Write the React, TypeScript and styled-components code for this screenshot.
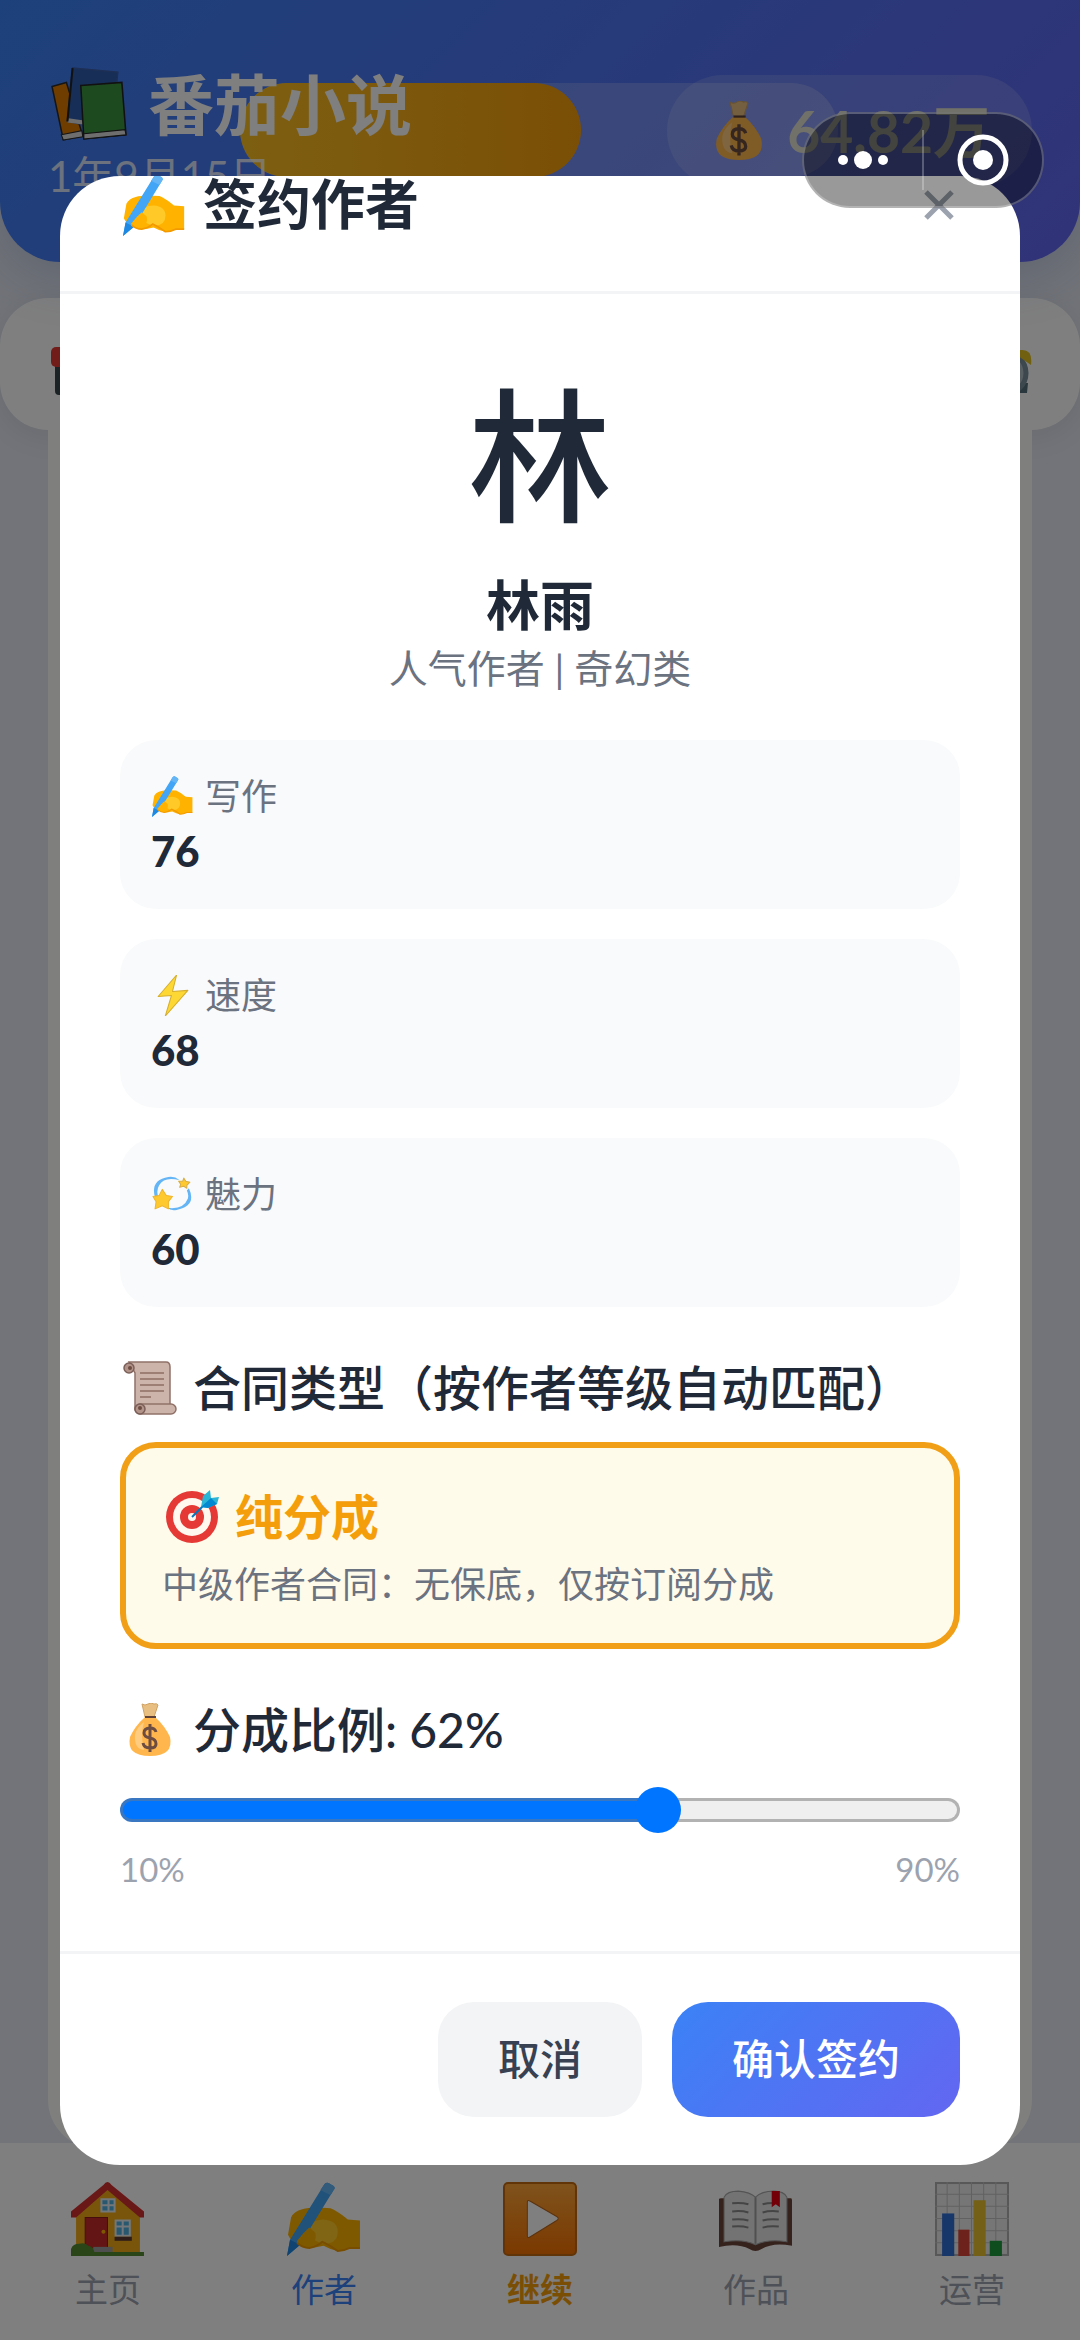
import React, { useLayoutEffect, useRef, useState } from 'react'
import styled, { createGlobalStyle } from 'styled-components'

const GlobalStyle = createGlobalStyle`
  * {
    box-sizing: border-box;
  }
  body {
    margin: 0;
    background: #e4e8f2;
    color: #1f2937;
    font-family: Lato, 'Noto Sans CJK SC', sans-serif;
  }
  button, input {
    font-family: inherit;
  }
  h1, h2, h3, p, dl, dt, dd {
    margin: 0;
  }
`

/* ---------- icons ---------- */

const Icon = styled.svg<{ $size: number }>`
  display: block;
  flex: none;
  width: ${p => p.$size}px;
  height: ${p => p.$size}px;
`

type IconProps = { size: number }

const WritingHand = ({ size }: IconProps) => (
  <Icon $size={size} viewBox="0 0 73 73" aria-hidden="true">
    <path d="M4 35Q7 29 15 27Q24 24 43 26Q50 29 60 37L72 38V65H62Q56 68 50 68Q43 67 36 63Q28 65 22 65Q14 64 10 60Q4 59 1 52Z" fill="#ffb300" />
    <path d="M18 48Q23 37 36 37Q50 38 50 49Q50 60 38 61Q26 60 18 48Z" fill="#ffca28" />
    <path d="M0 73L3 57L37 2Q39 0 41 1L46 4Q48 6 46 8L13 62Z" fill="#42a5f5" />
    <path d="M0 73L3 57L13 62Z" fill="#1e88e5" />
    <path d="M37 2Q39 0 41 1L46 4Q48 6 46 8L43 13L33 8Z" fill="#64b5f6" />
    <path d="M10 58Q16 50 22 45L28 50Q30 58 22 65Q14 64 10 60Z" fill="#ffb300" />
    <path d="M10 60Q15 65 22 65Q29 64 35 59Q42 62 50 68Q56 68 62 65H72" fill="none" stroke="#f29a00" strokeWidth="2" />
  </Icon>
)

const Books = ({ size }: IconProps) => (
  <Icon $size={size} viewBox="0 0 74 74" aria-hidden="true">
    <path d="M1 19L15 15L31 67L12 71Z" fill="#e07a00" stroke="#2b2b2b" strokeWidth="1.5" />
    <path d="M10 66L30 62L31 68L12 71Z" fill="#ddd" stroke="#2b2b2b" />
    <path d="M21 1L65 5L60 54L31 56L16 53Z" fill="#2f5cae" stroke="#3a5ea8" strokeWidth="1.5" />
    <path d="M17 50L32 52L31 56L16 54Z" fill="#ddd" />
    <path d="M21 1L16 53" stroke="#222" strokeWidth="2" />
    <path d="M29 18L69 15L73 66L32 70Z" fill="#3c9440" stroke="#222" strokeWidth="1.5" />
    <path d="M32 65L72 61L73 66L32 70Z" fill="#ddd" stroke="#222" />
  </Icon>
)

const Bolt = ({ size }: IconProps) => (
  <Icon $size={size} viewBox="0 0 40 40" aria-hidden="true">
    <path d="M24 0L6 21L19 20L13 40L35 15L20 16Z" fill="#fdd835" stroke="#d6ae2c" strokeLinejoin="round" />
  </Icon>
)

const Dizzy = ({ size }: IconProps) => (
  <Icon $size={size} viewBox="0 0 40 40" aria-hidden="true">
    <path d="M3 23Q-2 6 16 3Q22 2 27 6Q12 2 7 11Q4 16 6 22Z" fill="#64b5f6" />
    <path d="M36 14Q44 31 24 35Q18 36 15 33Q31 35 35 24Q36 20 34 16Z" fill="#64b5f6" />
    <path d="M10 15L14 21L20 22L16 27L16 34L10 31L3 34L4 27L1 22L7 21Z" fill="#fdc92f" stroke="#efb42a" strokeLinejoin="round" />
    <path d="M31 4L33 7L37 8L34 11L34 14L31 12L27 13L28 10L26 7L30 7Z" fill="#fdc92f" stroke="#d8ae45" strokeLinejoin="round" />
  </Icon>
)

const Scroll = ({ size }: IconProps) => (
  <Icon $size={size} viewBox="0 0 54 54" aria-hidden="true">
    <path d="M6 1H43Q47 1 47 6V48H12V12Z" fill="#cdb4aa" stroke="#907168" strokeWidth="1.5" />
    <circle cx="6" cy="7" r="5" fill="#b2938a" stroke="#7b5f58" strokeWidth="1.5" />
    <circle cx="7" cy="7" r="2" fill="#6d4c41" />
    <path d="M17 12H41M17 18H41M17 24H41M17 30H41M17 36H28" stroke="#8d6e63" strokeWidth="1.5" />
    <rect x="12" y="43" width="41" height="10" rx="5" fill="#cdb4aa" stroke="#907168" strokeWidth="1.5" />
    <circle cx="17" cy="48" r="5" fill="#b2938a" stroke="#7b5f58" strokeWidth="1.5" />
    <circle cx="17" cy="47" r="2" fill="#6d4c41" />
  </Icon>
)

const Target = ({ size }: IconProps) => (
  <Icon $size={size} viewBox="0 0 54 54" aria-hidden="true">
    <circle cx="27" cy="27" r="26" fill="#e53935" />
    <circle cx="27" cy="27" r="19" fill="#fff8ee" />
    <circle cx="27" cy="27" r="12" fill="#e53935" />
    <circle cx="27" cy="27" r="4" fill="#fff8ee" />
    <path d="M27 27L44 10" stroke="#0277bd" strokeWidth="2" />
    <path d="M36 17L38 6L45 0L46 8L54 7L52 14L43 18Z" fill="#29b6d6" />
    <path d="M36 17L46 8L52 14L43 18Z" fill="#0288d1" />
  </Icon>
)

const MoneyBag = ({ size }: IconProps) => (
  <Icon $size={size} viewBox="0 0 54 54" aria-hidden="true">
    <path d="M19 1Q22 3 25 1Q28 -1 31 1Q34 0 35 2L31 14H22Z" fill="#e8bf80" stroke="#d0a364" />
    <path d="M22 14H32Q42 23 47 34Q51 53 27 53Q3 53 7 34Q12 23 22 14Z" fill="#ffb74d" />
    <path d="M12 32Q13 25 21 19Q17 33 21 47Q11 46 12 32Z" fill="#ffcc80" />
    <path d="M22 14H33" stroke="#5d4037" strokeWidth="2" />
    <path d="M33 29Q32 25 27 25Q21 25 21 30Q21 34 27 35Q33 36 33 41Q33 45 27 45Q21 45 20 40M27 21V49" fill="none" stroke="#6d4c41" strokeWidth="3" />
  </Icon>
)

const House = ({ size }: IconProps) => (
  <Icon $size={size} viewBox="0 0 73 73" aria-hidden="true">
    <path d="M5 32L36 6L68 32V70H5Z" fill="#f0aa14" />
    <path d="M36 0Q38 0 40 3L72 29V35H68L36 8L5 35H0V29L32 3Q34 0 36 0Z" fill="#d32f2f" />
    <path d="M29 16H44V30H29ZM43 37H59V54H43Z" fill="#e8eef2" />
    <path d="M31 18H36V22H31ZM38 18H42V22H38ZM31 24H36V28H31ZM38 24H42V28H38ZM45 39H50V43H45ZM52 39H57V43H52ZM45 45H50V52H45ZM52 45H57V52H52Z" fill="#4fb0e0" />
    <path d="M14 35H36V65H14Z" fill="#c62828" stroke="#8e1c1c" />
    <circle cx="32" cy="49" r="2" fill="#ffb300" />
    <path d="M43 54H60V58H43Z" fill="#5d3a30" />
    <path d="M22 64H41V70H22Z" fill="#9e9e9e" />
    <path d="M0 73V66Q2 61 8 61Q14 59 17 63Q22 64 23 69H72V73Z" fill="#558b2f" />
  </Icon>
)

const PlayButton = ({ size }: IconProps) => (
  <Icon $size={size} viewBox="0 0 73 73" aria-hidden="true">
    <defs>
      <linearGradient id="play-fill" x1="0" y1="0" x2="0" y2="1">
        <stop offset="0" stopColor="#ffa63a" />
        <stop offset="1" stopColor="#f57200" />
      </linearGradient>
    </defs>
    <rect x="1" y="1" width="71" height="71" rx="4" fill="url(#play-fill)" stroke="#c46a10" strokeWidth="2" />
    <path d="M24 20Q24 17 27 19L53 34Q56 36 53 38L27 54Q24 56 24 53Z" fill="#fff" stroke="#b8651a" />
  </Icon>
)

const OpenBook = ({ size }: IconProps) => (
  <Icon $size={size} viewBox="0 0 73 73" aria-hidden="true">
    <path d="M0 17Q0 16 2 16H71Q72 16 72 18V63Q54 59 42 66Q36 70 30 66Q18 60 0 64Z" fill="#6d443b" />
    <path d="M5 15Q8 9 19 9Q31 10 36 15Q42 9 54 9Q64 9 67 15V59Q48 56 36 62Q24 56 5 59Z" fill="#e6e6e6" stroke="#a8a8a8" />
    <path d="M36 15V61" stroke="#a0a0a0" strokeWidth="2" />
    <path d="M13 21Q22 20 29 22M13 29Q22 28 29 30M13 37Q22 36 29 38M13 44Q22 43 29 45M43 22Q50 20 59 21M43 30Q50 28 59 29M43 38Q50 36 59 37M43 45Q50 43 59 44" fill="none" stroke="#8a8a8a" strokeWidth="2" />
    <path d="M52 9H60V25L56 22L52 25Z" fill="#e60012" />
  </Icon>
)

const BarChart = ({ size }: IconProps) => (
  <Icon $size={size} viewBox="0 0 73 73" aria-hidden="true">
    <rect x="1" y="1" width="71" height="71" fill="#ececec" stroke="#b0b0b0" strokeWidth="2" />
    <path d="M12 0V73M24 0V73M36 0V73M48 0V73M60 0V73M0 12H73M0 24H73M0 36H73M0 48H73M0 60H73" stroke="#c2c2c2" />
    <path d="M7 31H19V73H7Z" fill="#2f6fd6" />
    <path d="M23 47H34V73H23Z" fill="#db4437" />
    <path d="M38 18H50V73H38Z" fill="#e8c02c" />
    <path d="M54 58H66V73H54Z" fill="#1a9a3c" />
  </Icon>
)

const Siren = ({ size }: IconProps) => (
  <Icon $size={size} viewBox="0 0 54 54" aria-hidden="true">
    <path d="M4 20H50V48Q50 52 46 52H8Q4 52 4 48Z" fill="#37474f" />
    <rect x="0" y="4" width="54" height="20" rx="5" fill="#e53935" />
  </Icon>
)

const AlarmClock = ({ size }: IconProps) => (
  <Icon $size={size} viewBox="0 0 54 54" aria-hidden="true">
    <path d="M8 40L6 50H14ZM44 40H50L49 50H38Z" fill="#546e7a" />
    <circle cx="27" cy="30" r="21" fill="#b0bec5" stroke="#78909c" strokeWidth="5" />
    <path d="M1 19Q1 7 15 8ZM53 22Q55 6 43 7Q37 7 36 10Z" fill="#e0c020" />
    <path d="M27 18V32L36 36" fill="none" stroke="#37474f" strokeWidth="2" />
  </Icon>
)

/* ---------- page behind the dialog ---------- */

const Page = styled.div`
  display: flex;
  flex-direction: column;
  min-height: 100vh;
  padding-bottom: 192px;
  background: #e4e8f2;
`

const TopBar = styled.header`
  position: relative;
  display: flex;
  justify-content: space-between;
  align-items: center;
  padding: 60px 48px;
  border-radius: 0 0 60px 60px;
  background: linear-gradient(135deg, #3b82f6, #6366f1);
  box-shadow: 0 12px 60px rgba(59, 90, 160, 0.25);
  color: #fff;
`

const Brand = styled.div`
  position: relative;
`

const BrandName = styled.h1`
  display: flex;
  align-items: center;
  gap: 21px;
  padding-left: 3px;
  font-size: 66px;
  line-height: 90px;
  font-weight: 700;
`

const GameDate = styled.p`
  font-size: 42px;
  line-height: 52px;
  opacity: 0.8;
`

const Progress = styled.div`
  position: absolute;
  top: 83px;
  left: 240px;
  right: 242px;
  height: 94px;
  border-radius: 47px;
  background: rgba(255, 255, 255, 0.2);
`

const ProgressFill = styled.div`
  height: 100%;
  border-radius: 47px;
  background: linear-gradient(90deg, #fbbf24, #f59e0b);
`

const Money = styled.div`
  position: relative;
  display: flex;
  align-items: center;
  gap: 18px;
  padding: 18px 42px;
  border-radius: 60px;
  background: rgba(255, 255, 255, 0.15);
  color: #e2e2d2;
  font-size: 57px;
  line-height: 76px;
  font-weight: 700;
`

const NoticeBar = styled.section`
  display: flex;
  justify-content: space-between;
  align-items: center;
  margin-top: 36px;
  padding: 45px 48px 33px 51px;
  border-radius: 48px;
  background: #fff;
  box-shadow: 0 6px 30px rgba(0, 0, 0, 0.08);
`

const ContentCard = styled.main`
  flex: 1;
  margin: 0 48px;
  border-radius: 0 0 48px 48px;
  background: #fefefa;
`

const TabBar = styled.nav`
  position: fixed;
  left: 0;
  right: 0;
  bottom: 0;
  display: flex;
  background: #fff;
`

const Tab = styled.a<{ $color?: string; $strong?: boolean }>`
  flex: 1;
  display: flex;
  flex-direction: column;
  align-items: center;
  gap: 9px;
  padding: 39px 0 27px;
  color: ${p => p.$color || '#9ca3af'};
  font-size: 33px;
  line-height: 48px;
  font-weight: ${p => (p.$strong ? 700 : 400)};
  text-decoration: none;
`

/* ---------- dialog ---------- */

const Overlay = styled.div`
  position: fixed;
  inset: 0;
  display: flex;
  align-items: center;
  justify-content: center;
  padding: 0 60px;
  background: rgba(0, 0, 0, 0.5);
`

const Modal = styled.div`
  width: 100%;
  max-height: 85vh;
  overflow-y: auto;
  scrollbar-width: none;
  border-radius: 60px;
  background: #fff;
`

const ModalHeader = styled.div`
  display: flex;
  justify-content: space-between;
  align-items: center;
  padding: 48px 60px;
  border-bottom: 3px solid #f3f4f6;
`

const ModalTitle = styled.h2`
  display: flex;
  align-items: center;
  gap: 18px;
  padding-left: 3px;
  font-size: 54px;
  line-height: 76px;
  font-weight: 700;
`

const CloseButton = styled.button`
  display: flex;
  padding: 6px;
  border: 0;
  background: none;
  color: #9ca3af;
`

const ModalBody = styled.div`
  padding: 60px;
`

const Author = styled.div`
  display: flex;
  flex-direction: column;
  align-items: center;
  margin-bottom: 45px;
`

const Avatar = styled.div`
  margin-bottom: 12px;
  font-size: 144px;
  line-height: 204px;
  font-weight: 500;
`

const AuthorName = styled.h3`
  font-size: 54px;
  line-height: 72px;
  font-weight: 700;
`

const AuthorKind = styled.p`
  color: #6b7280;
  font-size: 39px;
  line-height: 53px;
`

const Stats = styled.dl`
  display: grid;
  gap: 30px;
  margin-bottom: 45px;
`

const Stat = styled.div`
  padding: 30px;
  border-radius: 36px;
  background: #f9fafb;
`

const StatLabel = styled.dt`
  display: flex;
  align-items: center;
  gap: 12px;
  padding-left: 2px;
  color: #6b7280;
  font-size: 36px;
  line-height: 53px;
`

const StatValue = styled.dd`
  padding-left: 1px;
  font-size: 42px;
  line-height: 56px;
  font-weight: 900;
`

const SectionTitle = styled.h3`
  display: flex;
  align-items: center;
  gap: 16px;
  margin-bottom: 18px;
  padding-left: 3px;
  font-size: 48px;
  line-height: 72px;
  font-weight: 500;
`

const Contract = styled.div`
  margin-bottom: 45px;
  padding: 36px 36px 33px;
  border: 6px solid #f09f16;
  border-radius: 36px;
  background: #fffbeb;
`

const ContractName = styled.p`
  display: flex;
  align-items: center;
  gap: 16px;
  margin-bottom: 9px;
  padding-left: 3px;
  color: #f59e0b;
  font-size: 48px;
  line-height: 66px;
  font-weight: 700;
`

const ContractNote = styled.p`
  color: #6b7280;
  font-size: 36px;
  line-height: 51px;
`

const Slider = styled.input`
  display: block;
  width: 100%;
  height: 52px;
  margin: 0;
  appearance: none;
  background: none;

  &::-webkit-slider-runnable-track {
    height: 24px;
    border: 3px solid transparent;
    border-radius: 12px;
    background:
      linear-gradient(90deg, #0075ff var(--fill), #efefef var(--fill)) padding-box,
      linear-gradient(90deg, #3a77c2 var(--fill), #b2b2b2 var(--fill)) border-box;
  }
  &::-webkit-slider-thumb {
    appearance: none;
    width: 46px;
    height: 46px;
    margin-top: -14px;
    border-radius: 50%;
    background: #0075ff;
  }
`

const SliderRange = styled.div`
  display: flex;
  justify-content: space-between;
  margin-top: 12px;
  color: #9ca3af;
  font-size: 33px;
  line-height: 43px;
`

const ModalFooter = styled.div`
  display: flex;
  justify-content: flex-end;
  gap: 30px;
  padding: 48px 60px;
  border-top: 3px solid #f3f4f6;
`

const Button = styled.button<{ $primary?: boolean }>`
  padding: 27px 60px;
  border: 0;
  border-radius: 36px;
  background: ${p => (p.$primary ? 'linear-gradient(135deg, #3b82f6, #6366f1)' : '#f3f4f6')};
  color: ${p => (p.$primary ? '#fff' : '#374151')};
  font-size: 42px;
  line-height: 61px;
  font-weight: 500;
`

/* ---------- mini program capsule ---------- */

const Capsule = styled.div`
  position: fixed;
  top: 112px;
  right: 36px;
  display: flex;
  align-items: center;
  border: 2px solid rgba(255, 255, 255, 0.25);
  border-radius: 48px;
  background: rgba(0, 0, 0, 0.4);
`

const CapsuleButton = styled.button`
  display: flex;
  justify-content: center;
  width: 118px;
  padding: 20px 0;
  border: 0;
  background: none;
  color: #fff;
`

const CapsuleDivider = styled.span`
  width: 2px;
  height: 60px;
  background: rgba(255, 255, 255, 0.25);
`

const stats = [
  { label: '写作', value: 76, icon: WritingHand },
  { label: '速度', value: 68, icon: Bolt },
  { label: '魅力', value: 60, icon: Dizzy },
]

const tabs = [
  { label: '主页', icon: House },
  { label: '作者', icon: WritingHand, color: '#3b82f6' },
  { label: '继续', icon: PlayButton, color: '#f59e0b', strong: true },
  { label: '作品', icon: OpenBook },
  { label: '运营', icon: BarChart },
]

const MIN_SHARE = 10
const MAX_SHARE = 90

function App() {
  const [share, setShare] = useState(62)
  const modalRef = useRef<HTMLDivElement>(null)

  // keep the confirm buttons in view when the dialog is taller than its frame
  useLayoutEffect(() => {
    const modal = modalRef.current
    if (modal) modal.scrollTop = modal.scrollHeight
  }, [])

  const fill = ((share - MIN_SHARE) / (MAX_SHARE - MIN_SHARE)) * 100

  return (
    <>
      <GlobalStyle />
      <Page>
        <TopBar>
          <Progress>
            <ProgressFill style={{ width: '57%' }} />
          </Progress>
          <Brand>
            <BrandName><Books size={76} />番茄小说</BrandName>
            <GameDate>1年9月15日</GameDate>
          </Brand>
          <Money><MoneyBag size={60} />64.82万</Money>
        </TopBar>
        <NoticeBar>
          <Siren size={54} />
          <AlarmClock size={54} />
        </NoticeBar>
        <ContentCard />
        <TabBar>
          {tabs.map(({ label, icon: TabIcon, color, strong }) => (
            <Tab key={label} href="#" $color={color} $strong={strong}>
              <TabIcon size={74} />
              {label}
            </Tab>
          ))}
        </TabBar>
      </Page>

      <Overlay>
        <Modal ref={modalRef} role="dialog" aria-labelledby="sign-title">
          <ModalHeader>
            <ModalTitle id="sign-title"><WritingHand size={62} />签约作者</ModalTitle>
            <CloseButton aria-label="关闭">
              <Icon $size={30} viewBox="0 0 30 30">
                <path d="M2 2L28 28M28 2L2 28" stroke="currentColor" strokeWidth="5" />
              </Icon>
            </CloseButton>
          </ModalHeader>
          <ModalBody>
            <Author>
              <Avatar>林</Avatar>
              <AuthorName>林雨</AuthorName>
              <AuthorKind>人气作者 | 奇幻类</AuthorKind>
            </Author>
            <Stats>
              {stats.map(({ label, value, icon: StatIcon }) => (
                <Stat key={label}>
                  <StatLabel><StatIcon size={41} />{label}</StatLabel>
                  <StatValue>{value}</StatValue>
                </Stat>
              ))}
            </Stats>
            <SectionTitle><Scroll size={54} />合同类型（按作者等级自动匹配）</SectionTitle>
            <Contract>
              <ContractName><Target size={54} />纯分成</ContractName>
              <ContractNote>中级作者合同：无保底，仅按订阅分成</ContractNote>
            </Contract>
            <SectionTitle as="label" htmlFor="share"><MoneyBag size={54} />分成比例: {share}%</SectionTitle>
            <Slider
              id="share"
              type="range"
              min={MIN_SHARE}
              max={MAX_SHARE}
              value={share}
              onChange={e => setShare(Number(e.target.value))}
              style={{ '--fill': `${fill}%` } as React.CSSProperties}
            />
            <SliderRange>
              <span>{MIN_SHARE}%</span>
              <span>{MAX_SHARE}%</span>
            </SliderRange>
          </ModalBody>
          <ModalFooter>
            <Button type="button">取消</Button>
            <Button type="button" $primary>确认签约</Button>
          </ModalFooter>
        </Modal>
      </Overlay>

      <Capsule>
        <CapsuleButton aria-label="更多">
          <Icon $size={52} viewBox="0 0 52 52">
            <circle cx="6" cy="26" r="5" fill="currentColor" />
            <circle cx="26" cy="26" r="9" fill="currentColor" />
            <circle cx="46" cy="26" r="5" fill="currentColor" />
          </Icon>
        </CapsuleButton>
        <CapsuleDivider />
        <CapsuleButton aria-label="退出">
          <Icon $size={52} viewBox="0 0 52 52">
            <circle cx="26" cy="26" r="23" fill="none" stroke="currentColor" strokeWidth="5" />
            <circle cx="26" cy="26" r="10" fill="currentColor" />
          </Icon>
        </CapsuleButton>
      </Capsule>
    </>
  )
}

export default App
